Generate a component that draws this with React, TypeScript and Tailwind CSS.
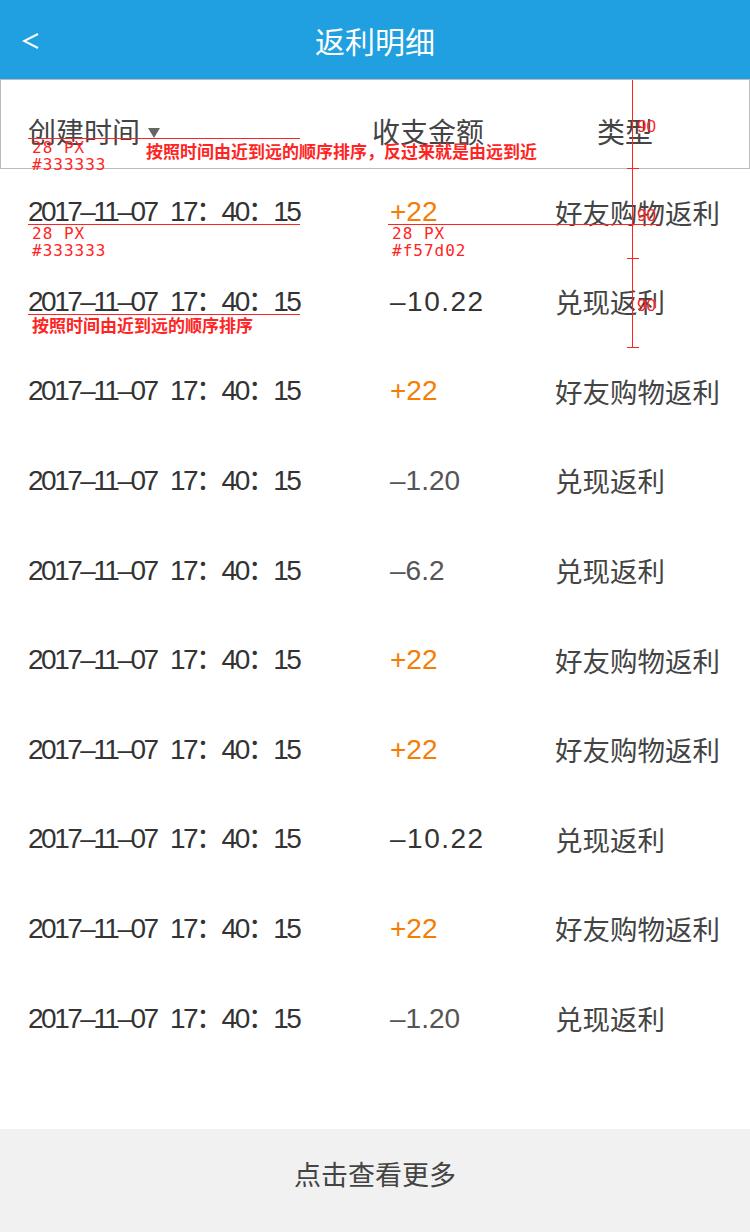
import React from "react";

const rows = [
  { amount: "+22", type: "好友购物返利", tone: "in" },
  { amount: "–10.22", type: "兑现返利", tone: "dark" },
  { amount: "+22", type: "好友购物返利", tone: "in" },
  { amount: "–1.20", type: "兑现返利", tone: "out" },
  { amount: "–6.2", type: "兑现返利", tone: "out" },
  { amount: "+22", type: "好友购物返利", tone: "in" },
  { amount: "+22", type: "好友购物返利", tone: "in" },
  { amount: "–10.22", type: "兑现返利", tone: "dark" },
  { amount: "+22", type: "好友购物返利", tone: "in" },
  { amount: "–1.20", type: "兑现返利", tone: "out" },
];

const font = "font-['Liberation_Sans','Noto_Sans_CJK_SC',sans-serif]";
const mono = "font-['DejaVu_Sans_Mono',monospace] text-[16px] leading-[17px] tracking-[1px]";
const note = "font-['Noto_Sans_CJK_SC',sans-serif] text-[17px] leading-[20px] font-bold";

// red spec marks the designer left on the mockup
function SpecLabel({ color }: { color: string }) {
  return (
    <div className={`flex flex-col pl-[4px] ${mono}`}>
      <span>28 PX</span>
      <span>{color}</span>
    </div>
  );
}

function Annotations() {
  return (
    <div className="pointer-events-none absolute inset-0 text-[#ff2424]">
      <div className="absolute left-[28px] top-[138px] flex flex-col">
        <div className="h-px w-[272px] bg-[#ff2424]" />
        <div className="flex items-start">
          <div className="w-[118px]">
            <SpecLabel color="#333333" />
          </div>
          <span className={`mt-[2px] ${note}`}>按照时间由近到远的顺序排序，反过来就是由远到近</span>
        </div>
      </div>

      <div className="absolute left-[28px] top-[224px] flex gap-[88px]">
        <div className="flex flex-col">
          <div className="h-px w-[272px] bg-[#ff2424]" />
          <SpecLabel color="#333333" />
          <div className="mt-[55px] h-px w-[272px] bg-[#ff2424]" />
          <span className={`pl-[4px] ${note}`}>按照时间由近到远的顺序排序</span>
        </div>
        <div className="flex flex-col">
          <div className="h-px w-[272px] bg-[#ff2424]" />
          <SpecLabel color="#f57d02" />
        </div>
      </div>

      <div className="absolute left-[627px] top-[80px] flex flex-col">
        {[0, 1, 2].map((k) => (
          <div key={k} className="flex h-[89.3px] flex-col">
            <div className="ml-[5px] flex-1 border-l border-[#ff2424] pl-[4px] pt-[39px] text-[17px] leading-[15px] font-['Liberation_Sans',sans-serif]">
              90
            </div>
            <div className="h-px w-[12px] bg-[#ff2424]" />
          </div>
        ))}
      </div>
    </div>
  );
}

export default function App() {
  return (
    <div className={`relative flex h-[1232px] w-[750px] flex-col bg-white text-[#333] ${font}`}>
      {/* Top bar */}
      <header className="flex h-[79px] shrink-0 items-center bg-[#20a0e0] px-[22px]">
        <svg width="18" height="16" viewBox="0 0 18 16" className="mt-[3px]">
          <polyline points="16,1 2,8 16,15" fill="none" stroke="white" strokeWidth="2" />
        </svg>
        <h1 className="flex-1 pr-[18px] text-center text-[30px] leading-none text-white font-['Noto_Sans_CJK_SC',sans-serif]">
          返利明细
        </h1>
      </header>

      {/* Column titles */}
      <div className="flex h-[90px] shrink-0 items-center border border-[#bbbbbb] pt-[14px] text-[28px] leading-none text-[#444] font-['Noto_Sans_CJK_SC',sans-serif]">
        <div className="flex w-[371px] items-center pl-[27px]">
          <span>创建时间</span>
          <svg className="ml-[8px] mt-[4px]" width="12" height="10" viewBox="0 0 12 10">
            <polygon points="0,0 12,0 6,10" fill="#666" />
          </svg>
        </div>
        <span className="w-[225px]">收支金额</span>
        <span>类型</span>
      </div>

      {/* Rows */}
      <div className="flex flex-col">
        {rows.map((r, i) => (
          <div key={i} className="flex h-[89.6px] items-center pb-[3px] text-[28px] leading-none">
            <span className="w-[390px] pl-[28px] text-[#333] tracking-[-2.5px] [word-spacing:8px]">
              2017–11–07 17：40：15
            </span>
            <span
              className={
                "w-[165px] " +
                (r.tone === "in"
                  ? "text-[#f57d02]"
                  : r.tone === "dark"
                  ? "text-[#333] tracking-[1.5px]"
                  : "text-[#555]")
              }
            >
              {r.amount}
            </span>
            <span className="text-[27.5px] text-[#444] font-['Noto_Sans_CJK_SC',sans-serif]">{r.type}</span>
          </div>
        ))}
      </div>

      {/* Load more */}
      <button className="mt-auto flex h-[103px] shrink-0 items-center justify-center bg-[#f1f1f1] pb-[12px] text-[27px] text-[#444] font-['Noto_Sans_CJK_SC',sans-serif]">
        点击查看更多
      </button>

      <Annotations />
    </div>
  );
}
